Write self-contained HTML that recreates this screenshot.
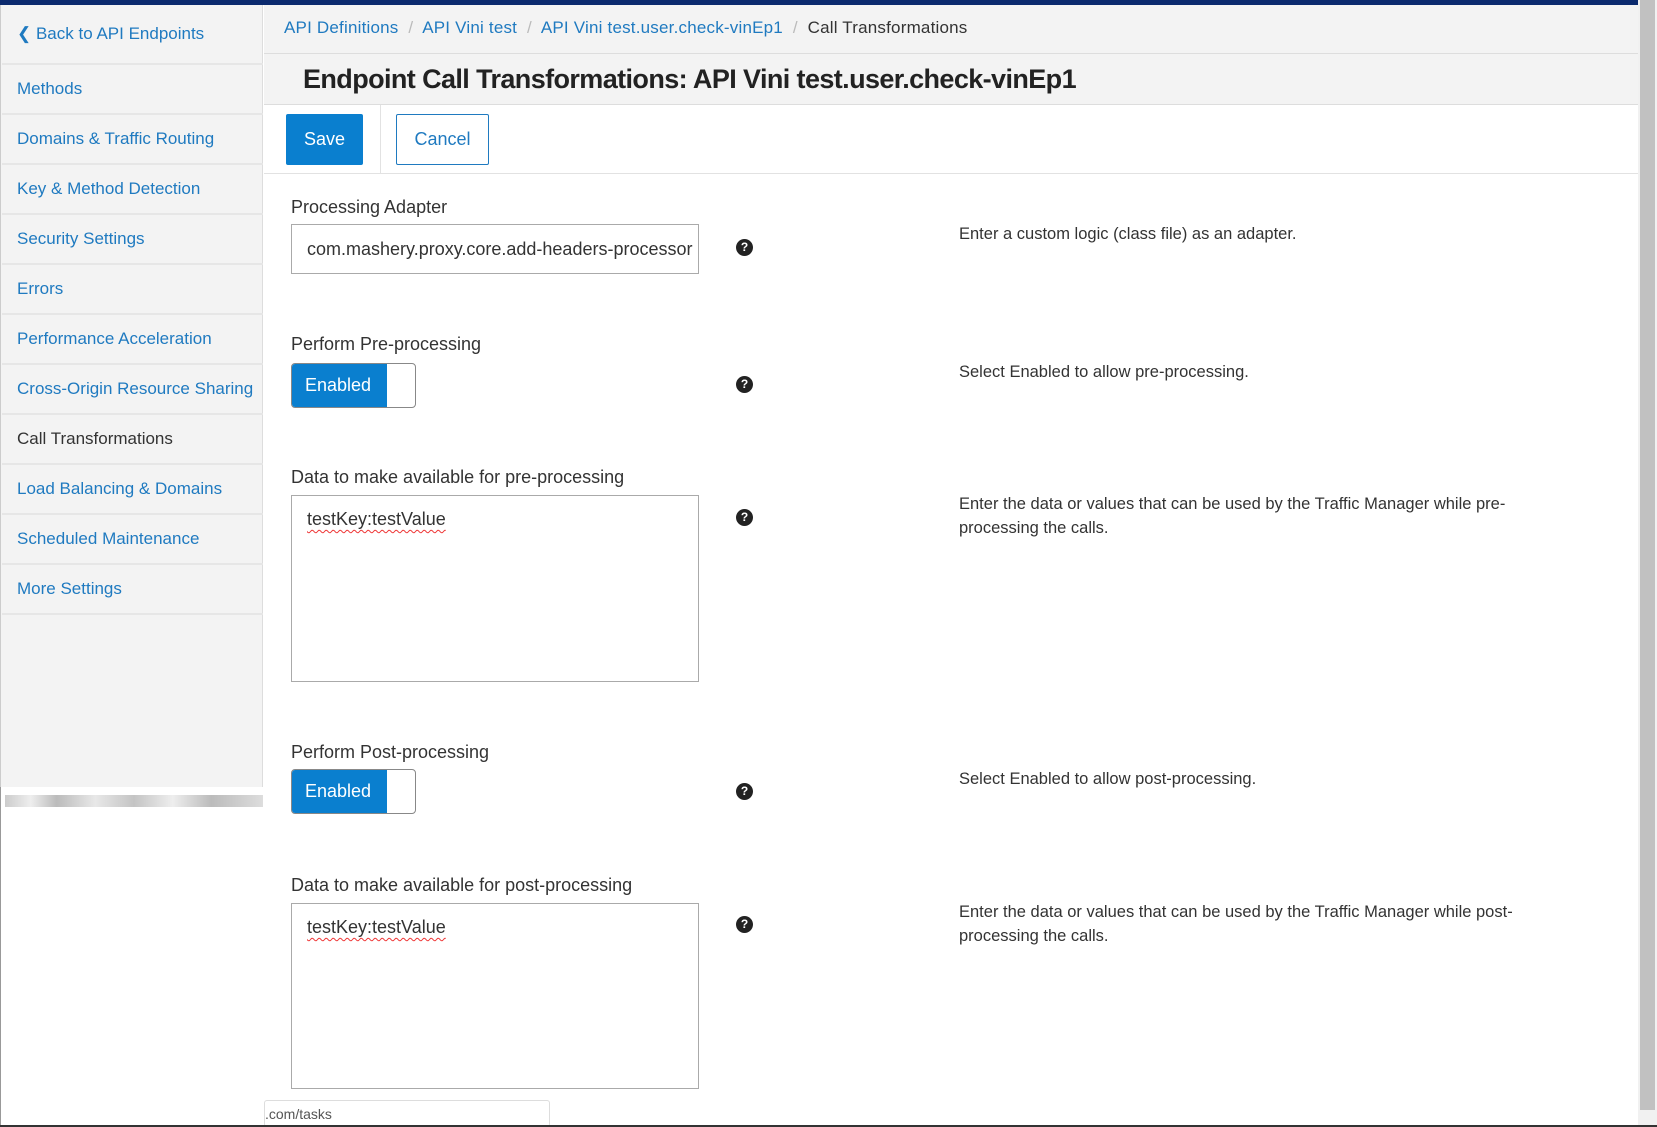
<!DOCTYPE html>
<html><head><meta charset="utf-8"><style>
*{box-sizing:border-box;margin:0;padding:0}
body{width:1657px;height:1127px;overflow:hidden;background:#fff;font-family:"Liberation Sans",sans-serif;color:#333;position:relative;font-size:16px;letter-spacing:0}
.a{position:absolute;white-space:nowrap}
.link{color:#1f7ac0}
#top{left:0;top:0;width:1638px;height:5px;background:#0b2a6e}
#side{left:0;top:5px;width:263px;height:782px;background:#f3f3f3;border-right:1px solid #ddd;border-left:1px solid #ccc}
.si{position:absolute;left:1px;width:261px;height:50px;border-bottom:2px solid #e6e6e6}
.si span{position:absolute;left:15px;top:14px;font-size:17px}
#hdr{left:264px;top:5px;width:1374px;height:100px;background:#f3f3f3;border-bottom:1px solid #ddd}
.q{position:absolute;width:17px;height:17px;border-radius:50%;background:#222;color:#fff;font-size:12px;font-weight:bold;text-align:center;line-height:17px;letter-spacing:0}
.lbl{font-size:18px;color:#333}
.help{font-size:16.5px;color:#333;line-height:24px}
.box{position:absolute;border:1px solid #aaa;background:#fff}
.tog{position:absolute;width:125px;height:45px;border:1px solid #888;border-radius:4px;overflow:hidden;background:#fff}
.tog div{position:absolute;left:0;top:0;width:95px;height:100%;background:#0a7fcf;color:#fff;font-size:18px;line-height:43px;padding-left:13px}
.sq{text-decoration:underline wavy #e33;text-underline-offset:4px;text-decoration-thickness:1px}
</style></head><body>
<div class="a" id="top"></div>
<div class="a" id="side">
 <div class="si" style="top:5px;height:55px"><span class="link" style="top:14px">&#10094; Back to API Endpoints</span></div>
 <div class="si" style="top:60px"><span class="link">Methods</span></div>
 <div class="si" style="top:110px"><span class="link">Domains &amp; Traffic Routing</span></div>
 <div class="si" style="top:160px"><span class="link">Key &amp; Method Detection</span></div>
 <div class="si" style="top:210px"><span class="link">Security Settings</span></div>
 <div class="si" style="top:260px"><span class="link">Errors</span></div>
 <div class="si" style="top:310px"><span class="link">Performance Acceleration</span></div>
 <div class="si" style="top:360px"><span class="link">Cross-Origin Resource Sharing</span></div>
 <div class="si" style="top:410px"><span style="color:#333">Call Transformations</span></div>
 <div class="si" style="top:460px"><span class="link">Load Balancing &amp; Domains</span></div>
 <div class="si" style="top:510px"><span class="link">Scheduled Maintenance</span></div>
 <div class="si" style="top:560px"><span class="link">More Settings</span></div>
</div>
<div class="a" style="left:5px;top:795px;width:258px;height:12px;background:linear-gradient(90deg,#ccc,#eee 10%,#bbb 20%,#e8e8e8 35%,#c4c4c4 50%,#eee 65%,#bbb 80%,#ddd)"></div>
<div class="a" style="left:0;top:787px;width:1px;height:340px;background:#999"></div>
<div class="a" id="hdr">
 <div style="position:absolute;left:0;top:48px;width:100%;border-top:1px solid #ddd"></div>
</div>
<div class="a" style="left:284px;top:18px;font-size:17px;letter-spacing:0.2px"><span class="link">API Definitions</span> <span style="color:#bbb">&nbsp;/&nbsp;</span> <span class="link">API Vini test</span> <span style="color:#bbb">&nbsp;/&nbsp;</span> <span class="link">API Vini test.user.check-vinEp1</span> <span style="color:#bbb">&nbsp;/&nbsp;</span> <span>Call Transformations</span></div>
<div class="a" style="left:303px;top:64px;font-size:27px;font-weight:bold;color:#222;letter-spacing:-0.6px">Endpoint Call Transformations: API Vini test.user.check-vinEp1</div>
<div class="a" style="left:286px;top:114px;width:77px;height:51px;background:#0a7fcf;border-radius:2px;color:#fff;font-size:18px;text-align:center;line-height:51px">Save</div>
<div class="a" style="left:380px;top:105px;width:1px;height:68px;background:#e2e2e2"></div>
<div class="a" style="left:396px;top:114px;width:93px;height:51px;border:1px solid #1f7ac0;border-radius:2px;color:#1f7ac0;font-size:18px;text-align:center;line-height:49px">Cancel</div>
<div class="a" style="left:264px;top:173px;width:1374px;height:1px;background:#e2e2e2"></div>

<div class="a lbl" style="left:291px;top:197px">Processing Adapter</div>
<div class="box" style="left:291px;top:224px;width:408px;height:50px;overflow:hidden"><div style="position:absolute;left:15px;top:14px;font-size:18px;white-space:nowrap">com.mashery.proxy.core.add-headers-processor</div></div>
<div class="q" style="left:736px;top:239px">?</div>
<div class="a help" style="left:959px;top:222px">Enter a custom logic (class file) as an adapter.</div>

<div class="a lbl" style="left:291px;top:334px">Perform Pre-processing</div>
<div class="tog" style="left:291px;top:363px"><div>Enabled</div></div>
<div class="q" style="left:736px;top:376px">?</div>
<div class="a help" style="left:959px;top:360px">Select Enabled to allow pre-processing.</div>

<div class="a lbl" style="left:291px;top:467px">Data to make available for pre-processing</div>
<div class="box" style="left:291px;top:495px;width:408px;height:187px"><div style="position:absolute;left:15px;top:13px;font-size:18px" class="sq">testKey:testValue</div></div>
<div class="q" style="left:736px;top:509px">?</div>
<div class="a help" style="left:959px;top:492px">Enter the data or values that can be used by the Traffic Manager while pre-<br>processing the calls.</div>

<div class="a lbl" style="left:291px;top:742px">Perform Post-processing</div>
<div class="tog" style="left:291px;top:769px"><div>Enabled</div></div>
<div class="q" style="left:736px;top:783px">?</div>
<div class="a help" style="left:959px;top:767px">Select Enabled to allow post-processing.</div>

<div class="a lbl" style="left:291px;top:875px">Data to make available for post-processing</div>
<div class="box" style="left:291px;top:903px;width:408px;height:186px"><div style="position:absolute;left:15px;top:13px;font-size:18px" class="sq">testKey:testValue</div></div>
<div class="q" style="left:736px;top:916px">?</div>
<div class="a help" style="left:959px;top:900px">Enter the data or values that can be used by the Traffic Manager while post-<br>processing the calls.</div>

<div class="a" style="left:264px;top:1100px;width:286px;height:27px;background:#fff;border:1px solid #ddd;border-radius:3px;font-size:14px;color:#555;padding:5px 0 0 0">.com/tasks</div>
<div class="a" style="left:1638px;top:0;width:19px;height:1127px;background:#f1f1f1"></div>
<div class="a" style="left:1640px;top:0;width:15px;height:1110px;background:#c1c1c1"></div>
<div class="a" style="left:0;top:1125px;width:1657px;height:2px;background:#333"></div>
</body></html>
